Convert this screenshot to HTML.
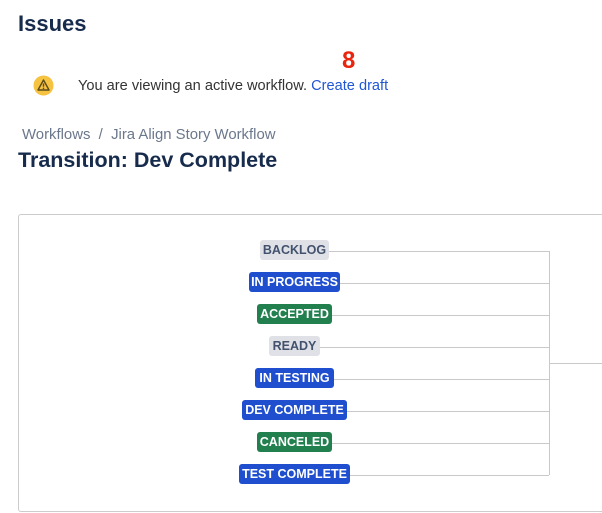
<!DOCTYPE html>
<html><head><style>
body{margin:0;width:602px;height:513px;background:#fff;font-family:"Liberation Sans",sans-serif;position:relative;overflow:hidden;color:#172b4d}
.a{position:absolute;white-space:nowrap}
.l{position:absolute;height:20px;line-height:20px;font-size:12.5px;font-weight:bold;border-radius:3px;text-align:center;color:#fff}
.g{background:#dfe1e6;color:#42526e}.b{background:#1f4fcf}.n{background:#22804f}
.h{position:absolute;height:1px;background:#c9c9c9}
</style></head><body>
<div class="a" style="left:18px;top:11px;font-size:22px;font-weight:bold">Issues</div>
<div class="a" style="left:342px;top:47px;font-size:24px;font-weight:bold;color:#e8260e">8</div>
<svg class="a" style="left:33px;top:75px" width="21" height="21" viewBox="0 0 21 21"><circle cx="10.5" cy="10.5" r="10" fill="#f5c242"/><path d="M10.5 5 L16 15 H5 Z" fill="none" stroke="#5a4a1a" stroke-width="1.4" stroke-linejoin="round"/><path d="M10.5 8.5v3.2" stroke="#5a4a1a" stroke-width="1.4"/><circle cx="10.5" cy="13.3" r=".8" fill="#5a4a1a"/></svg>
<div class="a" style="left:78px;top:78px;font-size:14.6px;color:#333">You are viewing an active workflow. <span style="color:#1f56d6">Create draft</span></div>
<div class="a" style="left:22px;top:127px;font-size:14.9px;color:#6b778c">Workflows &nbsp;/&nbsp; Jira Align Story Workflow</div>
<div class="a" style="left:18px;top:148px;font-size:21.5px;font-weight:bold">Transition: Dev Complete</div>
<div class="a" style="left:18px;top:214px;width:600px;height:296px;border:1px solid #ccc;border-radius:3px"></div>
<div class="a" style="left:549px;top:251px;width:1px;height:224px;background:#c9c9c9"></div>
<div class="h" style="left:549px;top:363px;width:53px"></div>
<div class="h" style="left:329px;top:251px;width:220px"></div>
<div class="h" style="left:340px;top:283px;width:209px"></div>
<div class="h" style="left:332px;top:315px;width:217px"></div>
<div class="h" style="left:320px;top:347px;width:229px"></div>
<div class="h" style="left:334px;top:379px;width:215px"></div>
<div class="h" style="left:347px;top:411px;width:202px"></div>
<div class="h" style="left:332px;top:443px;width:217px"></div>
<div class="h" style="left:350px;top:475px;width:199px"></div>
<div class="l g" style="left:260px;top:240px;width:69px">BACKLOG</div>
<div class="l b" style="left:249px;top:272px;width:91px">IN PROGRESS</div>
<div class="l n" style="left:257px;top:304px;width:75px">ACCEPTED</div>
<div class="l g" style="left:269px;top:336px;width:51px">READY</div>
<div class="l b" style="left:255px;top:368px;width:79px">IN TESTING</div>
<div class="l b" style="left:242px;top:400px;width:105px">DEV COMPLETE</div>
<div class="l n" style="left:257px;top:432px;width:75px">CANCELED</div>
<div class="l b" style="left:239px;top:464px;width:111px">TEST COMPLETE</div>
</body></html>
